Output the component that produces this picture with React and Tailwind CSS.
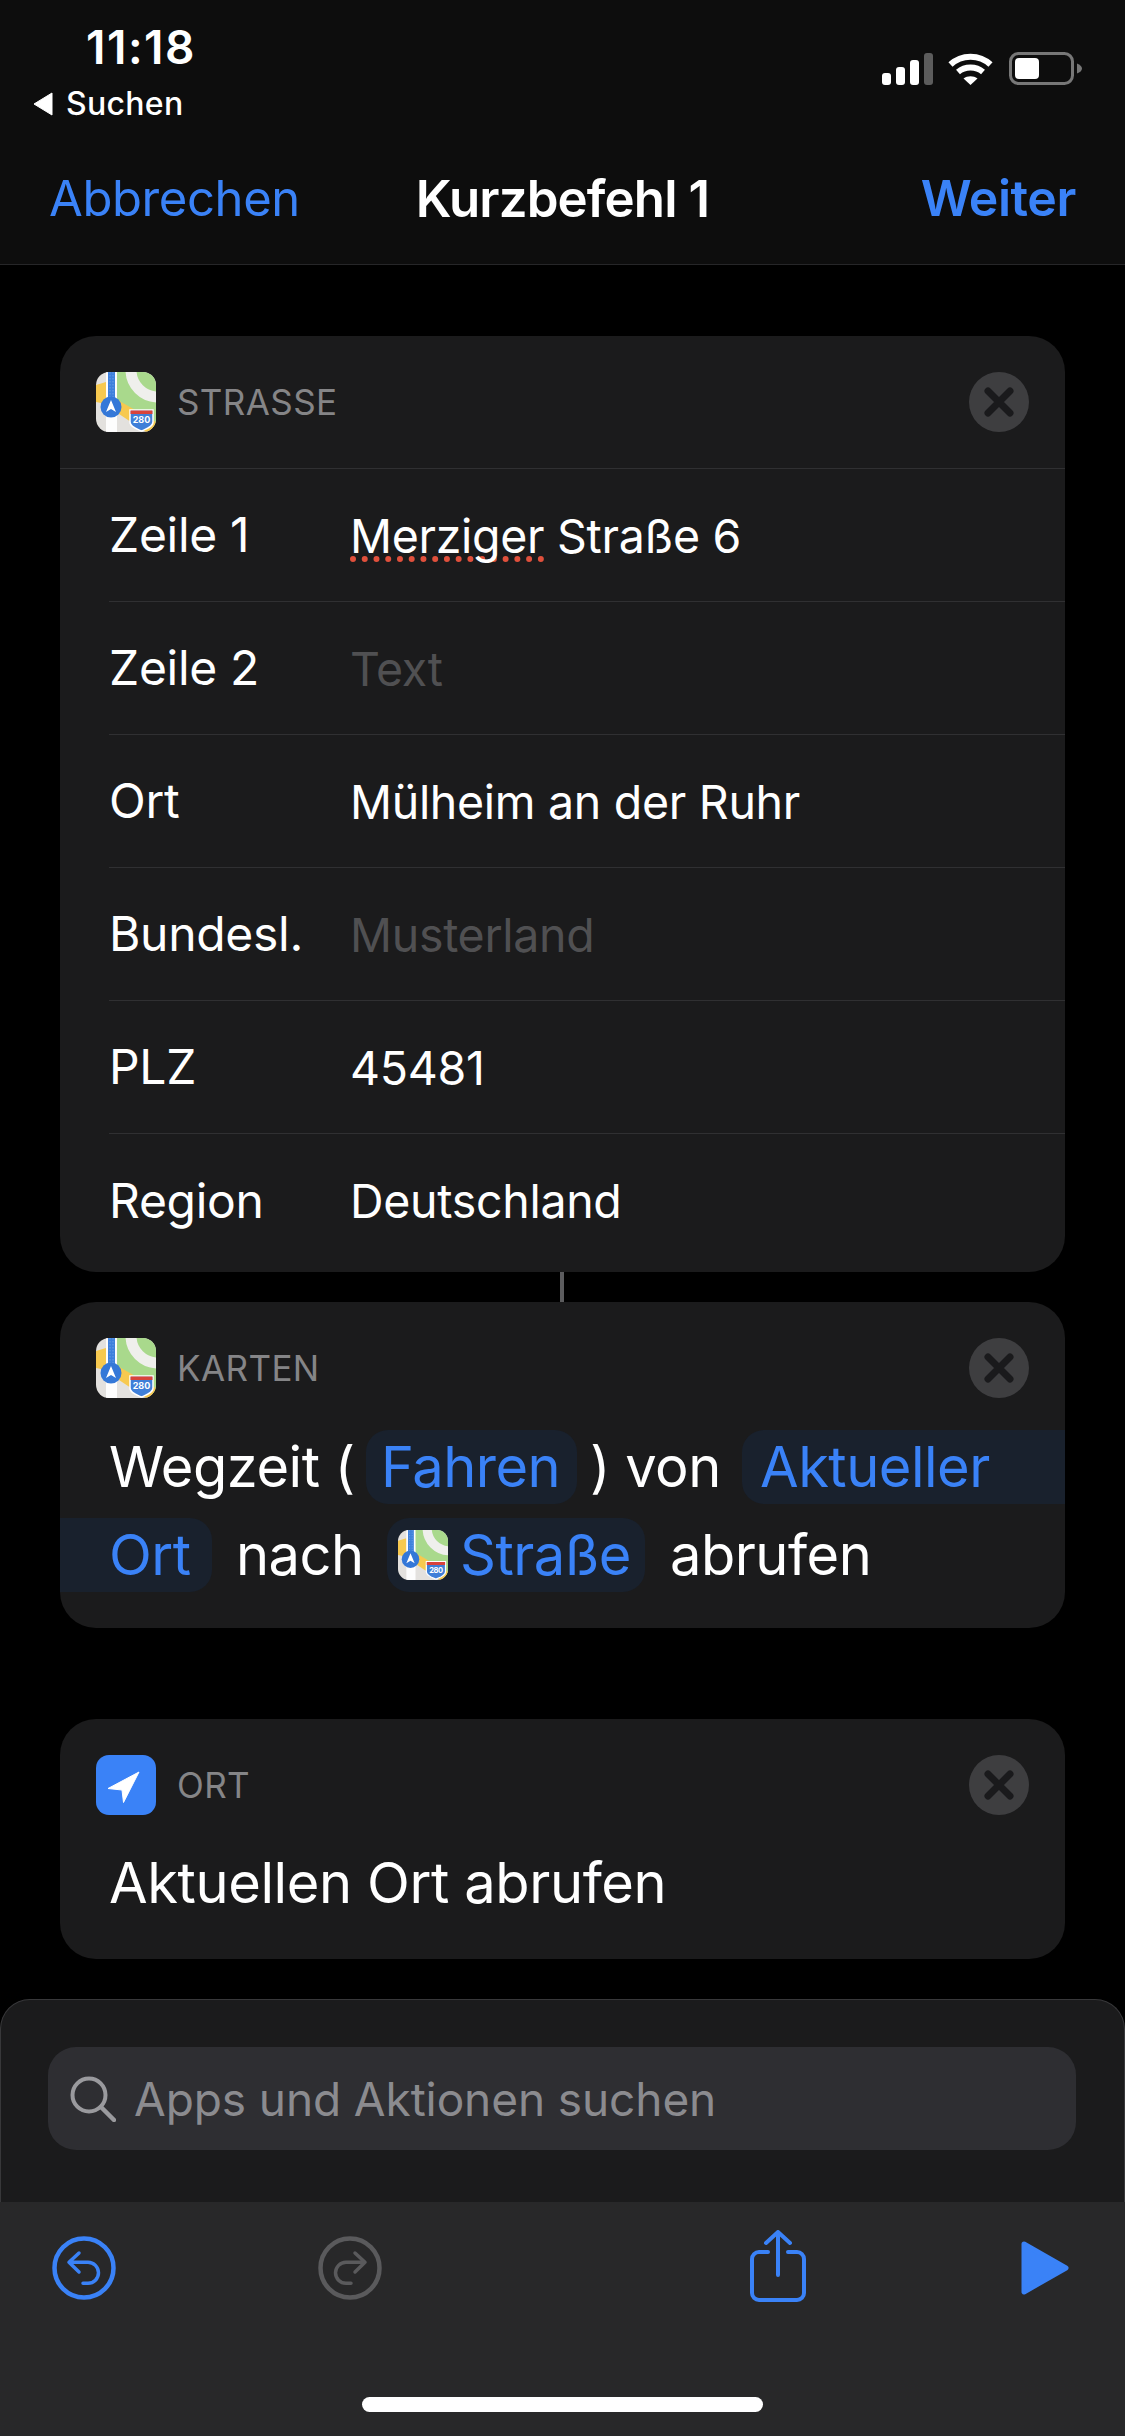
import React from "react";

const font = { fontFamily: "Inter, 'Liberation Sans', sans-serif" };

function MapsIcon({ size = 60, className = "" }) {
  return (
    <div className={`shrink-0 overflow-hidden ${className}`} style={{ width: size, height: size, borderRadius: size * 0.22 }}>
      <svg viewBox="0 0 60 60" width={size} height={size} className="block">
        <rect width="60" height="60" fill="#e3e1de" />
        <path d="M20 0H60V58L21 33Z" fill="#a9d98c" />
        <circle cx="62" cy="-2" r="27" fill="none" stroke="#efefec" strokeWidth="11" />
        <path d="M20 27L60 50V60H50L20 40Z" fill="#f7c94f" />
        <path d="M0 13L10 10V32L0 30Z" fill="#f7c94f" />
        <path d="M10 0H21V60H10Z" fill="#fdfdfd" />
        <path d="M12 0H19V30H12Z" fill="#3d80dc" />
        <path d="M14 0V30M17 0V30" stroke="#8ab4ee" strokeWidth="0.6" strokeDasharray="1.5 1.5" />
        <circle cx="15" cy="35" r="10.5" fill="#3478d8" />
        <path d="M15 28L20 40L15 37L10 40Z" fill="#fff" />
        <path d="M34 38H57V50C57 55 50 57 45.500 59C41 57 34 55 34 50Z" fill="#3f7fd8" stroke="#fff" strokeWidth="1.500" />
        <path d="M34.500 38.500H56.500V42H34.500Z" fill="#d8433b" />
        <text x="45.500" y="51" textAnchor="middle" fontSize="9" fontWeight="700" fill="#fff" fontFamily="Inter, sans-serif">280</text>
      </svg>
    </div>
  );
}

function LocationIcon() {
  return (
    <div className="flex h-[60px] w-[60px] shrink-0 items-center justify-center rounded-[13px] bg-[#3a82f7]">
      <svg viewBox="0 0 60 60" width="60" height="60" className="block">
        <path d="M43 17L12 33.500L26 35L27.500 47.500Z" fill="#fff" stroke="#fff" strokeWidth="1" strokeLinejoin="round" />
      </svg>
    </div>
  );
}

function CloseButton() {
  return (
    <div className="flex h-[60px] w-[60px] shrink-0 items-center justify-center rounded-full bg-[#3e3e40]">
      <svg viewBox="0 0 30 30" width="30" height="30" className="block">
        <path d="M4 4L26 26M26 4L4 26" stroke="#1a1a1c" strokeWidth="7" strokeLinecap="round" />
      </svg>
    </div>
  );
}

function CardHeader({ icon, label, border }) {
  return (
    <div className={`flex items-center pl-[36px] pr-[36px] ${border ? "h-[133px] border-b border-[#303032]" : "h-[132px]"}`}>
      {icon}
      <span className="ml-[21px] flex-1 text-[35px] leading-none tracking-[0.4px] text-[#858587]">{label}</span>
      <CloseButton />
    </div>
  );
}

function Row({ label, value, placeholder, last, children }) {
  return (
    <div className={`ml-[49px] flex h-[133px] items-center ${last ? "" : "border-b border-[#303032]"}`}>
      <span className="w-[241px] text-[48px] leading-none tracking-[-0.3px] text-white">{label}</span>
      <span className={`translate-y-[1px] text-[46.5px] leading-none tracking-[-0.3px] ${placeholder ? "text-[#505052]" : "text-white"}`}>
        {children || value}
      </span>
    </div>
  );
}

function Signal() {
  return (
    <svg viewBox="0 0 51 32" width="51" height="32" className="block">
      <rect x="0" y="20" width="9" height="12" rx="3" fill="#fff" />
      <rect x="14" y="14" width="9" height="18" rx="3" fill="#fff" />
      <rect x="28" y="7" width="9" height="25" rx="3" fill="#fff" />
      <rect x="42" y="0" width="9" height="32" rx="3" fill="#5c5c5c" />
    </svg>
  );
}

function Wifi() {
  return (
    <svg viewBox="0 0 45 33" width="45" height="33" className="block">
      <path d="M2.500 12.500C13.500 2 31.500 2 42.500 12.500" fill="none" stroke="#fff" strokeWidth="6" />
      <path d="M10 20C17 14 28 14 35 20" fill="none" stroke="#fff" strokeWidth="6" />
      <path d="M15.500 26.500C19.500 23.500 25.500 23.500 29.500 26.500L22.500 33Z" fill="#fff" />
    </svg>
  );
}

function Battery() {
  return (
    <svg viewBox="0 0 73 33" width="73" height="33" className="block">
      <rect x="1.500" y="1.500" width="62" height="30" rx="8" fill="none" stroke="#777" strokeWidth="3" />
      <rect x="6" y="6" width="24" height="21" rx="4" fill="#fff" />
      <path d="M68 11.500C71 12.500 73 14.500 73 16.500C73 18.500 71 20.500 68 21.500Z" fill="#777" />
    </svg>
  );
}

function Pill({ children, className = "" }) {
  return (
    <span className={`flex h-[74px] items-center bg-[#19212d] text-[#3a82f7] ${className}`}>{children}</span>
  );
}

export default function App() {
  return (
    <div className="flex h-[2436px] w-[1125px] flex-col overflow-hidden bg-black text-white antialiased" style={font}>
      <header className="h-[265px] shrink-0 border-b border-[#262628] bg-[#0d0d0d]">
        <div className="flex h-[132px] items-start justify-between">
          <div className="flex flex-col">
            <span className="ml-[86px] mt-[24px] text-[46px] font-semibold leading-[46px] tracking-[1.5px]">11:18</span>
            <div className="ml-[32px] mt-[18px] flex items-center">
              <svg viewBox="0 0 21 24" width="21" height="24" className="block">
                <path d="M20 1V23L2 12Z" fill="#fff" stroke="#fff" strokeWidth="1" strokeLinejoin="round" />
              </svg>
              <span className="ml-[13px] text-[32px] font-medium leading-[32px] tracking-[0.3px]">Suchen</span>
            </div>
          </div>
          <div className="mr-[43px] mt-[52px] flex items-end gap-[15px]">
            <Signal />
            <Wifi />
            <span className="ml-[1px]"><Battery /></span>
          </div>
        </div>
        <div className="grid h-[132px] grid-cols-[1fr_auto_1fr] items-center pl-[49px] pr-[49px]">
          <span className="text-[49px] leading-none tracking-[-0.4px] text-[#3a82f7]">Abbrechen</span>
          <span className="text-[51px] font-semibold leading-none tracking-[-0.9px]">Kurzbefehl 1</span>
          <span className="justify-self-end text-[50px] font-semibold leading-none tracking-[-0.4px] text-[#3a82f7]">Weiter</span>
        </div>
      </header>

      <main className="flex flex-1 flex-col">
        <section className="mx-[60px] mt-[71px] h-[936px] rounded-[36px] bg-[#1b1b1c]">
          <CardHeader icon={<MapsIcon />} label="STRASSE" border />
          <Row label="Zeile 1">
            <span className="underline decoration-[#e0503c] decoration-dotted decoration-[6px] underline-offset-[4px] [text-decoration-skip-ink:none]">Merziger</span> Straße 6
          </Row>
          <Row label="Zeile 2" value="Text" placeholder />
          <Row label="Ort" value="Mülheim an der Ruhr" />
          <Row label="Bundesl." value="Musterland" placeholder />
          <Row label="PLZ" value="45481" />
          <Row label="Region" value="Deutschland" last />
        </section>

        <div className="ml-[560px] h-[30px] w-[4px] bg-[#5c5c5e]" />

        <section className="mx-[60px] h-[326px] overflow-hidden rounded-[36px] bg-[#1b1b1c]">
          <CardHeader icon={<MapsIcon />} label="KARTEN" />
          <div className="mt-[-4px] text-[56px] leading-none tracking-[-0.5px]">
            <div className="flex h-[74px] items-center">
              <span className="ml-[49px] w-[257px]">Wegzeit (</span>
              <Pill className="w-[211px] rounded-[22px] pl-[15px]">Fahren</Pill>
              <span className="ml-[13px] w-[152px]">) von</span>
              <Pill className="flex-1 rounded-l-[22px] pl-[18px]">Aktueller</Pill>
            </div>
            <div className="mt-[14px] flex h-[74px] items-center">
              <Pill className="w-[152px] rounded-r-[22px] pl-[49px]">Ort</Pill>
              <span className="ml-[24px] w-[151px]">nach</span>
              <Pill className="w-[258px] rounded-[22px] pl-[11px]">
                <MapsIcon size={50} />
                <span className="ml-[12px]">Straße</span>
              </Pill>
              <span className="ml-[25px]">abrufen</span>
            </div>
          </div>
        </section>

        <section className="mx-[60px] mt-[91px] h-[240px] rounded-[36px] bg-[#1b1b1c]">
          <CardHeader icon={<LocationIcon />} label="ORT" />
          <div className="ml-[49px] mt-[-5px] text-[56px] leading-[74px] tracking-[-0.4px]">Aktuellen Ort abrufen</div>
        </section>

        <section className="mt-[40px] flex-1 rounded-t-[30px] border border-b-0 border-[#38383a] bg-[#1b1b1c] pl-[47px] pr-[48px] pt-[47px]">
          <div className="flex h-[103px] items-center rounded-[28px] bg-[#2e2e32] pl-[22px]">
            <svg viewBox="0 0 46 46" width="46" height="46" className="block shrink-0">
              <circle cx="19" cy="19" r="16.500" fill="none" stroke="#9a9a9e" strokeWidth="4" />
              <path d="M31 31L44 44" stroke="#9a9a9e" strokeWidth="4.500" strokeLinecap="round" />
            </svg>
            <span className="ml-[18px] text-[46px] leading-none tracking-[-0.1px] text-[#8b8b8f]">Apps und Aktionen suchen</span>
          </div>
        </section>

        <footer className="h-[234px] shrink-0 bg-[#282829]">
          <div className="flex h-[98px] items-end pl-[52px]">
            <svg viewBox="0 0 64 64" width="64" height="64" className="block" fill="none" stroke="#3a82f7">
              <circle cx="32" cy="32" r="29.500" strokeWidth="4.500" />
              <path d="M27 17L17 26.300L27 36M17 26.300H36A10.500 10.500 0 0 1 36 47.300H31" strokeWidth="3.500" strokeLinecap="round" strokeLinejoin="round" />
            </svg>
            <svg viewBox="0 0 64 64" width="64" height="64" className="ml-[202px] block" fill="none" stroke="#5a5a5c">
              <circle cx="32" cy="32" r="29.500" strokeWidth="4.500" />
              <path d="M37 17L47 26.300L37 36M47 26.300H28A10.500 10.500 0 0 0 28 47.300H33" strokeWidth="3.500" strokeLinecap="round" strokeLinejoin="round" />
            </svg>
            <svg viewBox="0 0 56 72" width="56" height="72" className="ml-[368px] mb-[-2px] block" fill="none" stroke="#3a82f7">
              <path d="M16 13L28 2L40 13M28 2V45" strokeWidth="4" strokeLinecap="round" strokeLinejoin="round" />
              <path d="M18 22H9A7 7 0 0 0 2 29V63A7 7 0 0 0 9 70H47A7 7 0 0 0 54 63V29A7 7 0 0 0 47 22H38" strokeWidth="4" strokeLinecap="round" />
            </svg>
            <svg viewBox="0 0 48 54" width="48" height="54" className="ml-[215px] mb-[5px] block">
              <path d="M3 3L45 27L3 51Z" fill="#3a82f7" stroke="#3a82f7" strokeWidth="5" strokeLinejoin="round" />
            </svg>
          </div>
          <div className="ml-[362px] mt-[97px] h-[15px] w-[401px] rounded-full bg-white" />
        </footer>
      </main>
    </div>
  );
}
